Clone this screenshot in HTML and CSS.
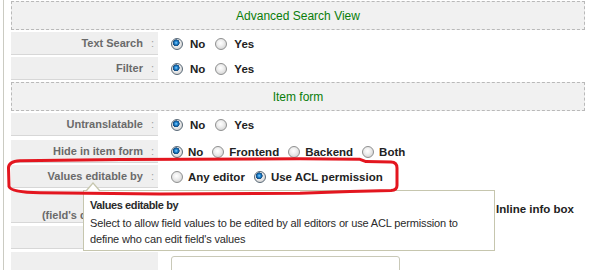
FILE: index.html
```html
<!DOCTYPE html>
<html>
<head>
<meta charset="utf-8">
<link rel="stylesheet" href="styles.css">
</head>
<body>
<div class="page">
  <div class="frame">
    <div class="form">
      <div class="section">Advanced Search View</div>
      <div class="row">
        <div class="label">Text Search<span class="colon">:</span></div>
        <div class="value wide">
          <span class="opt"><span class="radio checked"></span>No</span>
          <span class="opt"><span class="radio"></span>Yes</span>
        </div>
      </div>
      <div class="row">
        <div class="label">Filter<span class="colon">:</span></div>
        <div class="value wide">
          <span class="opt"><span class="radio checked"></span>No</span>
          <span class="opt"><span class="radio"></span>Yes</span>
        </div>
      </div>
      <div class="section">Item form</div>
      <div class="row">
        <div class="label">Untranslatable<span class="colon">:</span></div>
        <div class="value wide">
          <span class="opt"><span class="radio checked"></span>No</span>
          <span class="opt"><span class="radio"></span>Yes</span>
        </div>
      </div>
      <div class="row row-spaced">
        <div class="label">Hide in item form<span class="colon">:</span></div>
        <div class="value">
          <span class="opt"><span class="radio checked"></span>No</span>
          <span class="opt"><span class="radio"></span>Frontend</span>
          <span class="opt"><span class="radio"></span>Backend</span>
          <span class="opt"><span class="radio"></span>Both</span>
        </div>
      </div>
      <div class="row">
        <div class="label">Values editable by<span class="colon">:</span></div>
        <div class="value">
          <span class="opt"><span class="radio"></span>Any editor</span>
          <span class="opt"><span class="radio checked"></span>Use ACL permission</span>
        </div>
      </div>
      <div class="row row-tall">
        <div class="label label-bottom">(field's description)<span class="colon">:</span></div>
        <div class="value value-low">
          <span class="opt"><span class="radio checked"></span>No</span>
          <span class="opt"><span class="radio"></span>Tooltip</span>
          <span class="opt opt-end"><span class="radio"></span>Inline info box</span>
        </div>
      </div>
      <div class="row row-gap">
        <div class="label"></div>
        <div class="value"></div>
      </div>
      <div class="row row-gap row-last">
        <div class="label"></div>
        <div class="value value-top"><span class="textbox"></span></div>
      </div>
    </div>
  </div>

  <div class="tooltip">
    <div class="tip-title">Values editable by</div>
    <div class="tip-body">Select to allow field values to be edited by all editors or use ACL permission to<br>define who can edit field's values</div>
  </div>

  <svg class="annot" width="614" height="270" viewBox="0 0 614 270">
    <path d="M8.5 168 Q8.5 161.5 20 160.8 L120 159.6 L300 158.8 L360 159.3 L366 161.6 L391 162 Q397 162.2 397 168 L397 185.5 Q397 190.2 391 190.6 L350 191.6 L300 193.3 L160 194 L40 192.8 Q11 192.4 9 186.5 Z" fill="none" stroke="#e3161f" stroke-width="3" stroke-linejoin="round"/>
  </svg>
</div>
</body>
</html>
```

FILE: styles.css
```css
html, body {
  margin: 0;
  padding: 0;
  background: #ffffff;
}

body {
  font-family: "Liberation Sans", Arial, sans-serif;
  overflow: hidden;
}

.page {
  position: relative;
  width: 614px;
  height: 270px;
  overflow: hidden;
}

.frame {
  margin-left: 3px;
  border-left: 1px solid #cbcbc2;
  padding: 1px 0 0 7px;
  height: 269px;
}

.form {
  width: 574px;
  display: flex;
  flex-direction: column;
  gap: 2px;
}

.section {
  height: 29px;
  box-sizing: border-box;
  border: 1px dashed #b9b9b9;
  background: #f1f1f1;
  color: #0a7d0a;
  font-size: 12px;
  display: flex;
  align-items: center;
  justify-content: center;
}

.row {
  display: flex;
  height: 23px;
  flex-shrink: 0;
}

.row-spaced {
  margin-top: 2px;
}

.row-tall {
  height: 33px;
}

.row-gap {
  margin-top: 1px;
}

.row-last {
  height: 40px;
}

.label {
  width: 147px;
  flex-shrink: 0;
  box-sizing: border-box;
  background: #efefef;
  border-bottom: 1px solid #d7d7d7;
  display: flex;
  align-items: center;
  justify-content: flex-end;
  padding-right: 4px;
  color: #6a6a6a;
  font-size: 11px;
  font-weight: bold;
  white-space: nowrap;
}

.label-bottom {
  align-items: flex-end;
  line-height: 14px;
}

.colon {
  margin-left: 8px;
  color: #a0a0a0;
  font-weight: normal;
}

.value {
  flex: 1;
  display: flex;
  align-items: center;
  padding-left: 13px;
  font-size: 11.5px;
  font-weight: bold;
  color: #222;
  white-space: nowrap;
}

.value-low {
  padding-top: 5px;
  padding-right: 11px;
}

.value-top {
  align-items: flex-start;
}

.opt {
  display: flex;
  align-items: center;
  margin-right: 9px;
}

.opt-end {
  margin-left: auto;
  margin-right: 0;
}

.radio {
  width: 12px;
  height: 12px;
  box-sizing: border-box;
  border-radius: 50%;
  border: 1px solid #8f9090;
  background: radial-gradient(circle at 45% 40%, #ffffff 0, #f0f0f0 35%, #c9c9c9 100%);
  margin-right: 5px;
  flex-shrink: 0;
}

.wide .radio {
  margin-right: 7px;
}

.wide .opt {
  margin-right: 10px;
}

.radio.checked {
  border-color: #5a6a78;
  background:
    radial-gradient(circle at 42% 38%, #8fd0ff 0, #2a8fd8 1.3px, #0c5a9c 2.6px, rgba(12, 60, 110, 0.9) 3.2px, rgba(0, 0, 0, 0) 3.6px),
    radial-gradient(circle at 45% 40%, #ffffff 0, #eeeeee 40%, #c4c4c4 100%);
}

.textbox {
  display: block;
  margin-top: 4px;
  width: 229px;
  height: 30px;
  box-sizing: border-box;
  border: 1px solid #c9c9b8;
  border-radius: 3px;
  background: #fff;
}

.tooltip {
  position: absolute;
  left: 83px;
  top: 190px;
  width: 412px;
  height: 61px;
  box-sizing: border-box;
  border: 1px solid #c6c6ae;
  background: #ffffff;
  padding: 6px 6px 3px 6px;
  color: #2a2a2a;
  z-index: 2;
}

.tooltip::before {
  content: "";
  position: absolute;
  left: 2px;
  top: -9px;
  border-left: 7px solid transparent;
  border-right: 7px solid transparent;
  border-bottom: 8px solid #c6c6ae;
}

.tooltip::after {
  content: "";
  position: absolute;
  left: 3px;
  top: -7px;
  border-left: 6px solid transparent;
  border-right: 6px solid transparent;
  border-bottom: 7px solid #ffffff;
}

.tip-title {
  font-size: 11px;
  font-weight: bold;
  letter-spacing: -0.4px;
  line-height: 16px;
  margin-bottom: 2px;
}

.tip-body {
  font-size: 11px;
  letter-spacing: -0.15px;
  line-height: 16px;
  white-space: nowrap;
}

.annot {
  position: absolute;
  left: 0;
  top: 0;
  z-index: 3;
  pointer-events: none;
}
```
